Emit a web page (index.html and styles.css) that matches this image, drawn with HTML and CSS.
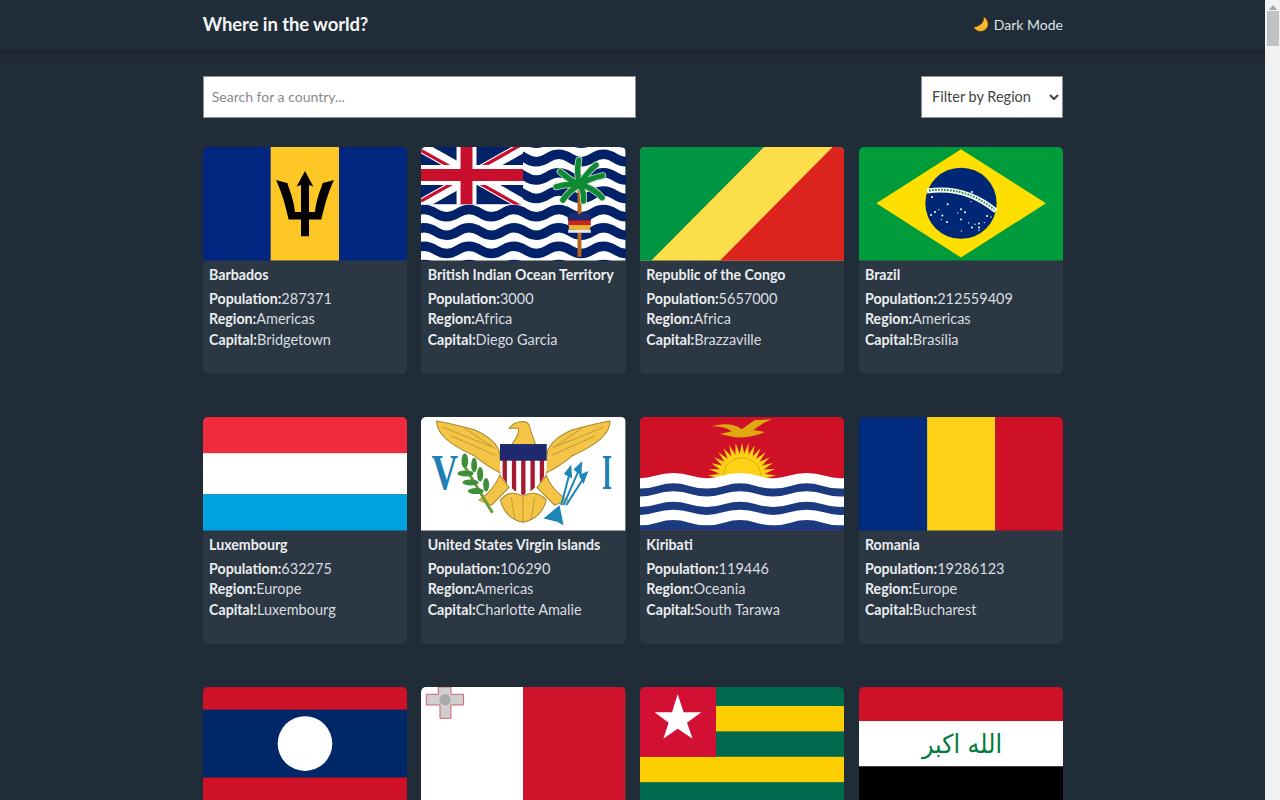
FILE: index.html
```html
<!doctype html>
<html>
<head>
<meta charset="utf-8">
<title>Where in the world?</title>
<link rel="stylesheet" href="styles.css">
</head>
<body>
<div class="page">
	<header class="top">
		<div class="wrap top_in">
			<h1>Where in the world?</h1>
			<div class="mode">
				<svg class="moon" viewBox="0 0 16 16"><path d="M10.500 .5C11.500 5 9 9.500 .5 11.500C3 15 7 16 10 15C14 13.500 15.500 10 15 7C14.500 4 13 2 10.500 .5Z" fill="#f6b92b" stroke="#4a3a14" stroke-width=".5"/></svg>
				<span>Dark Mode</span>
			</div>
		</div>
	</header>

	<div class="wrap">
		<div class="tools">
			<input class="search" type="text" placeholder="Search for a country...">
			<select class="filter">
				<option>Filter by Region</option>
				<option>Africa</option>
				<option>Americas</option>
				<option>Asia</option>
				<option>Europe</option>
				<option>Oceania</option>
			</select>
		</div>

		<div class="grid">
			<!-- row 1 -->
			<div class="card">
				<svg class="flag" viewBox="9 20 613 341" preserveAspectRatio="none">
					<rect x="9" y="20" width="613" height="341" fill="#00267f"/>
					<rect x="212" y="20" width="205" height="341" fill="#ffc726"/>
					<path d="M315 92L340 139L327 134V215H345C350 170 362 150 368 128C380 125 392 122 402 119C382 160 372 205 364 238H327V288H303V238H266C258 205 248 160 228 119C238 122 250 125 262 128C268 150 280 170 285 215H303V134L290 139Z" fill="#000"/>
				</svg>
				<div class="info">
					<h2>Barbados</h2>
					<p><b>Population:</b>287371</p>
					<p><b>Region:</b>Americas</p>
					<p><b>Capital:</b>Bridgetown</p>
				</div>
			</div>

			<div class="card">
				<svg class="flag" viewBox="3 6 615 340" preserveAspectRatio="none">
					<clipPath id="jack"><rect x="3" y="6" width="307" height="172"/></clipPath>
					<rect x="3" y="6" width="615" height="340" fill="#fff"/>
					<g fill="none" stroke="#012169" stroke-width="28">
						<path id="wave" d="M-156 39q34 -22 67.500 0t67.500 0t67.500 0t67.500 0t67.500 0t67.500 0t67.500 0t67.500 0t67.500 0t67.500 0t67.500 0t67.500 0t67.500 0t67.500 0"/>
						<use href="#wave" y="-55"/>
						<use href="#wave" y="55"/>
						<use href="#wave" y="110"/>
						<use href="#wave" y="165"/>
						<use href="#wave" y="220"/>
						<use href="#wave" y="275"/>
						<use href="#wave" y="330"/>
					</g>
					<g clip-path="url(#jack)">
						<rect x="3" y="6" width="307" height="172" fill="#012169"/>
						<path d="M3 6L310 178M310 6L3 178" stroke="#fff" stroke-width="34"/>
						<path d="M3 16L310 188M310 -4L3 168" stroke="#c8102e" stroke-width="10"/>
						<path d="M140 6V178M3 90H310" stroke="#fff" stroke-width="60"/>
						<path d="M140 6V178M3 90H310" stroke="#c8102e" stroke-width="36"/>
					</g>
					<path d="M480 120V335" stroke="#b5651d" stroke-width="12"/>
					<g fill="none" stroke="#c8d8c8" stroke-width="21" stroke-linecap="round">
						<path d="M480 120Q470 80 478 45"/>
						<path d="M480 120Q500 85 530 60"/>
						<path d="M480 120Q510 100 550 92"/>
						<path d="M480 120Q520 125 548 158"/>
						<path d="M480 120Q495 140 492 168"/>
						<path d="M480 120Q450 135 430 165"/>
						<path d="M480 120Q445 115 410 125"/>
						<path d="M480 120Q450 105 422 80"/>
					</g>
					<g fill="none" stroke="#0f8a34" stroke-width="16" stroke-linecap="round">
						<path d="M480 120Q470 80 478 45"/>
						<path d="M480 120Q500 85 530 60"/>
						<path d="M480 120Q510 100 550 92"/>
						<path d="M480 120Q520 125 548 158"/>
						<path d="M480 120Q495 140 492 168"/>
						<path d="M480 120Q450 135 430 165"/>
						<path d="M480 120Q445 115 410 125"/>
						<path d="M480 120Q450 105 422 80"/>
					</g>
					<path d="M446 228C438 200 465 198 480 208C495 198 522 200 514 228Z" fill="#1f2a6e"/>
					<rect x="446" y="226" width="68" height="16" fill="#c8251f"/>
					<rect x="448" y="240" width="64" height="14" fill="#e9b52c"/>
					<rect x="446" y="254" width="68" height="9" fill="#e8e8e8"/>
				</svg>
				<div class="info">
					<h2>British Indian Ocean Territory</h2>
					<p><b>Population:</b>3000</p>
					<p><b>Region:</b>Africa</p>
					<p><b>Capital:</b>Diego Garcia</p>
				</div>
			</div>

			<div class="card">
				<svg class="flag" viewBox="0 20 613 341" preserveAspectRatio="none">
					<rect y="20" width="613" height="341" fill="#fbde4a"/>
					<path d="M0 20H372L34 361H0Z" fill="#009543"/>
					<path d="M578 20H613V361H240Z" fill="#dc241f"/>
				</svg>
				<div class="info">
					<h2>Republic of the Congo</h2>
					<p><b>Population:</b>5657000</p>
					<p><b>Region:</b>Africa</p>
					<p><b>Capital:</b>Brazzaville</p>
				</div>
			</div>

			<div class="card">
				<svg class="flag" viewBox="656 20 613 341" preserveAspectRatio="none">
					<rect x="656" y="20" width="613" height="341" fill="#009b3a"/>
					<path d="M708 189L962 27L1217 189L962 352Z" fill="#fedf00"/>
					<circle cx="962" cy="189" r="107" fill="#002776"/>
					<path d="M860 152Q975 135 1067 212" fill="none" stroke="#fff" stroke-width="15"/>
					<path d="M866 151Q975 137 1062 208" fill="none" stroke="#1a8a4a" stroke-width="6" stroke-dasharray="5 4"/>
					<g fill="#fff">
						<circle cx="875" cy="170" r="3"/><circle cx="995" cy="155" r="3"/><circle cx="922" cy="192" r="3"/>
						<circle cx="884" cy="215" r="3"/><circle cx="872" cy="224" r="3"/><circle cx="895" cy="208" r="2"/>
						<circle cx="906" cy="226" r="3"/><circle cx="903" cy="238" r="2"/><circle cx="920" cy="245" r="3"/>
						<circle cx="962" cy="207" r="3"/><circle cx="952" cy="218" r="2"/><circle cx="974" cy="216" r="3"/>
						<circle cx="962" cy="238" r="3"/><circle cx="985" cy="248" r="2"/><circle cx="995" cy="262" r="3"/>
						<circle cx="1004" cy="252" r="2"/><circle cx="1016" cy="250" r="3"/><circle cx="1016" cy="262" r="3"/>
						<circle cx="1032" cy="247" r="2"/><circle cx="1040" cy="227" r="3"/><circle cx="1052" cy="230" r="2"/>
						<circle cx="963" cy="272" r="2"/><circle cx="1016" cy="270" r="2"/><circle cx="992" cy="184" r="2"/>
					</g>
				</svg>
				<div class="info">
					<h2>Brazil</h2>
					<p><b>Population:</b>212559409</p>
					<p><b>Region:</b>Americas</p>
					<p><b>Capital:</b>Brasília</p>
				</div>
			</div>

			<!-- row 2 -->
			<div class="card">
				<svg class="flag" viewBox="0 0 205 113" preserveAspectRatio="none">
					<rect width="205" height="36" fill="#ef2b3d"/>
					<rect y="36" width="205" height="41" fill="#fff"/>
					<rect y="77" width="205" height="36" fill="#00a2e1"/>
				</svg>
				<div class="info">
					<h2>Luxembourg</h2>
					<p><b>Population:</b>632275</p>
					<p><b>Region:</b>Europe</p>
					<p><b>Capital:</b>Luxembourg</p>
				</div>
			</div>

			<div class="card">
				<svg class="flag" viewBox="3 21 615 340" preserveAspectRatio="none">
					<clipPath id="shield"><path d="M240 102H382V175C375 210 345 240 310 255C275 240 245 210 240 175Z"/></clipPath>
					<rect x="3" y="21" width="615" height="340" fill="#fff"/>
					<text class="vi" x="35" y="238" textLength="80" lengthAdjust="spacingAndGlyphs">V</text>
					<text class="vi" x="548" y="238" textLength="30" lengthAdjust="spacingAndGlyphs">I</text>
					<g fill="#f3c445" stroke="#a8862c" stroke-width="3">
						<path id="wing" d="M50 33C90 40 130 50 165 60C200 75 235 100 240 130L245 190C225 180 190 160 165 138C130 122 90 102 70 78C55 62 50 50 50 33Z"/>
						<use href="#wing" transform="translate(622) scale(-1 1)"/>
						<path d="M240 195L268 232L215 285L178 270C200 255 225 235 240 195Z"/>
						<path d="M380 195L352 232L405 285L444 270C422 255 395 235 380 195Z"/>
						<path d="M242 270C262 245 285 245 310 258C335 245 358 245 380 270C372 305 345 330 310 336C275 330 250 305 242 270Z"/>
						<path d="M268 55C285 30 325 28 330 50C335 75 345 90 348 105H275C290 85 300 65 296 55Z"/>
					</g>
					<g fill="none" stroke="#a8862c" stroke-width="2">
						<path d="M70 52L215 110M95 78L225 135M135 55L225 115M275 262L285 328M310 258V336M345 262L335 328"/>
						<path d="M552 52L407 110M527 78L397 135M487 55L397 115"/>
					</g>
					<g clip-path="url(#shield)">
						<rect x="240" y="102" width="142" height="155" fill="#fff"/>
						<path d="M255 150V255M283 150V255M311 150V255M339 150V255M367 150V255" stroke="#a6192e" stroke-width="13"/>
						<rect x="240" y="102" width="142" height="50" fill="#1f2a6e"/>
					</g>
					<path d="M128 158L218 308" stroke="#6f9a3a" stroke-width="9"/>
					<g fill="#3f8f3a">
						<ellipse cx="135" cy="152" rx="10" ry="22"/>
						<ellipse cx="137" cy="190" rx="24" ry="9"/><ellipse cx="163" cy="165" rx="9" ry="22"/>
						<ellipse cx="152" cy="217" rx="24" ry="9"/><ellipse cx="181" cy="193" rx="9" ry="22"/>
						<ellipse cx="168" cy="243" rx="24" ry="9"/><ellipse cx="199" cy="224" rx="9" ry="20"/>
					</g>
					<g fill="none" stroke="#1e86b8" stroke-width="6">
						<path d="M425 285L450 190M432 285L478 180M440 285L495 200"/>
					</g>
					<g fill="#1e86b8">
						<path d="M433 192L455 163L458 205Z"/>
						<path d="M462 178L488 153L486 197Z"/>
						<path d="M478 195L507 183L492 222Z"/>
						<path d="M372 325L420 285L432 345L412 335Z"/>
					</g>
				</svg>
				<div class="info">
					<h2>United States Virgin Islands</h2>
					<p><b>Population:</b>106290</p>
					<p><b>Region:</b>Americas</p>
					<p><b>Capital:</b>Charlotte Amalie</p>
				</div>
			</div>

			<div class="card">
				<svg class="flag" viewBox="0 21 613 340" preserveAspectRatio="none">
					<rect y="21" width="613" height="340" fill="#ce1126"/>
					<g transform="translate(306 200)" fill="#fcd116">
						<path id="ray" d="M-10 -52L0 -102L10 -52Z"/>
						<use href="#ray" transform="rotate(-88)"/><use href="#ray" transform="rotate(-77)"/>
						<use href="#ray" transform="rotate(-66)"/><use href="#ray" transform="rotate(-55)"/>
						<use href="#ray" transform="rotate(-44)"/><use href="#ray" transform="rotate(-33)"/>
						<use href="#ray" transform="rotate(-22)"/><use href="#ray" transform="rotate(-11)"/>
						<use href="#ray" transform="rotate(11)"/><use href="#ray" transform="rotate(22)"/>
						<use href="#ray" transform="rotate(33)"/><use href="#ray" transform="rotate(44)"/>
						<use href="#ray" transform="rotate(55)"/><use href="#ray" transform="rotate(66)"/>
						<use href="#ray" transform="rotate(77)"/><use href="#ray" transform="rotate(88)"/>
						<circle r="57" stroke="#b8860b" stroke-width="1.500"/>
					</g>
					<path d="M215 50C250 38 285 42 305 58L345 30L395 28C370 38 355 50 340 60L375 66C345 78 315 84 285 82L240 72L275 64C260 52 240 48 215 50Z" fill="#e0a912"/>
					<rect y="205" width="613" height="156" fill="#1b3a80"/>
					<g fill="none" stroke="#fff" stroke-width="31">
						<path id="kwave" d="M-150 212q50 -16 100 0t100 0t100 0t100 0t100 0t100 0t100 0t100 0"/>
						<use href="#kwave" y="55"/>
						<use href="#kwave" y="110"/>
					</g>
				</svg>
				<div class="info">
					<h2>Kiribati</h2>
					<p><b>Population:</b>119446</p>
					<p><b>Region:</b>Oceania</p>
					<p><b>Capital:</b>South Tarawa</p>
				</div>
			</div>

			<div class="card">
				<svg class="flag" viewBox="0 0 3 1" preserveAspectRatio="none">
					<rect width="1" height="1" fill="#002b7f"/>
					<rect x="1" width="1" height="1" fill="#fcd116"/>
					<rect x="2" width="1" height="1" fill="#ce1126"/>
				</svg>
				<div class="info">
					<h2>Romania</h2>
					<p><b>Population:</b>19286123</p>
					<p><b>Region:</b>Europe</p>
					<p><b>Capital:</b>Bucharest</p>
				</div>
			</div>

			<!-- row 3 -->
			<div class="card">
				<svg class="flag" viewBox="9 20 613 341" preserveAspectRatio="none">
					<rect x="9" y="20" width="613" height="341" fill="#ce1126"/>
					<rect x="9" y="88" width="613" height="204" fill="#002868"/>
					<circle cx="315" cy="190" r="82" fill="#fff"/>
				</svg>
			</div>

			<div class="card">
				<svg class="flag" viewBox="664 20 614 341" preserveAspectRatio="none">
					<rect x="664" y="20" width="307" height="341" fill="#fff"/>
					<rect x="971" y="20" width="307" height="341" fill="#cf142b"/>
					<path d="M716 20H754V42H792V74H754V114H721V74H680V42H716Z" fill="#cfcfcf" stroke="#d0606e" stroke-width="3"/>
					<circle cx="736" cy="58" r="17" fill="#a9a9a9"/>
				</svg>
			</div>

			<div class="card">
				<svg class="flag" viewBox="0 21 613 340" preserveAspectRatio="none">
					<rect y="21" width="613" height="340" fill="#006a4e"/>
					<rect y="78" width="613" height="76" fill="#ffce00"/>
					<rect y="230" width="613" height="76" fill="#ffce00"/>
					<rect y="21" width="228" height="209" fill="#d21034"/>
					<path d="M113 43L131 97L184 97L141 128L158 176L113 146L70 176L86 128L44 97L96 97Z" fill="#fff"/>
				</svg>
			</div>

			<div class="card">
				<svg class="flag" viewBox="656 21 613 340" preserveAspectRatio="none">
					<rect x="656" y="21" width="613" height="102" fill="#ce1126"/>
					<rect x="656" y="123" width="613" height="136" fill="#fff"/>
					<rect x="656" y="259" width="613" height="102" fill="#000"/>
					<text class="takbir" x="845" y="218" textLength="240" lengthAdjust="spacingAndGlyphs">الله اكبر</text>
				</svg>
			</div>
		</div>
	</div>
</div>

<div class="bar">
	<span class="bar_up"></span>
	<span class="bar_thumb"></span>
</div>
</body>
</html>
```

FILE: styles.css
```css
* {margin:0; padding:0; box-sizing:border-box;}
body {display:flex; height:100vh; overflow:hidden; background:#202c37; color:#e9ecee; font-family:"Lato","Open Sans",sans-serif;}

.page {flex:1; min-width:0; overflow:hidden;}
.wrap {width:860.200px; margin-left:202.800px;}

.top {height:50px; background:#202c37; box-shadow:0 2px 10px rgba(0,0,0,.35);}
.top_in {display:flex; justify-content:space-between; align-items:center; height:100%;}
.top h1 {font-size:18.500px; font-weight:700; letter-spacing:-.1px; color:#f4f5f6; margin-top:-3px;}
.mode {display:flex; align-items:center; gap:5px; font-size:14px; color:#dfe3e6; margin-top:-2px;}
.moon {width:16px; height:16px;}

.tools {display:flex; justify-content:space-between; margin-top:26px;}
.search {width:433.500px; height:42px; padding:0 8px 2px; background:#fff; border:1px solid #8b9096; font-family:inherit; font-size:14px; outline:none;}
.search::placeholder {color:#8a8a8a;}
.filter {width:142px; height:42px; padding:0 6px 2px; background:#fff; border:1px solid #8b9096; color:#444; font-family:inherit; font-size:14.500px;}

.grid {display:grid; grid-template-columns:repeat(4,1fr); grid-auto-rows:227px; gap:43px 14.300px; margin-top:29px;}
.card {background:#2b3743; border-radius:5px; overflow:hidden;}
.flag {display:block; width:100%; height:113.500px;}
.info {padding:5px 6.300px 0;}
.info h2 {font-size:14.200px; line-height:18px; font-weight:700; margin-bottom:5px; color:#eceef0; white-space:nowrap;}
.info p {font-size:14.500px; line-height:20.500px; font-weight:400; white-space:nowrap; color:#d9dde0;}
.info b {font-size:14.200px; font-weight:700; color:#eceef0;}

.vi {font-family:"Liberation Serif",serif; font-weight:700; font-size:150px; fill:#1e7fb5;}
.takbir {font-family:"DejaVu Sans",sans-serif; font-weight:400; font-size:78px; fill:#007a3d;}

.bar {flex:none; width:15px; background:#f1f1f1; display:flex; flex-direction:column; align-items:center;}
.bar_up {width:0; height:0; margin-top:5px; border:4px solid transparent; border-top:0; border-bottom:5px solid #a3a3a3;}
.bar_thumb {width:12px; height:35px; margin-top:1px; background:#c1c1c1;}
```
